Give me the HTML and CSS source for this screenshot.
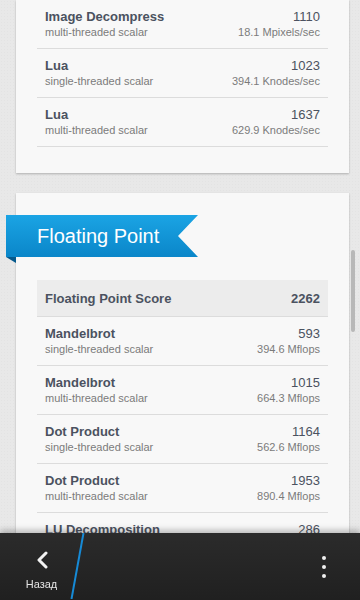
FILE: index.html
```html
<!DOCTYPE html>
<html lang="ru">
<head>
  <meta charset="UTF-8" />
  <meta name="viewport" content="width=device-width, initial-scale=1" />
  <title>Geekbench - Results</title>
  <link rel="stylesheet" href="styles.css">
</head>
<body>

<main class="page">
  <section class="card card-top">
    <div class="row">
      <div class="row-line"><span class="name">Image Decompress</span><span class="score">1110</span></div>
      <div class="row-line sub"><span>multi-threaded scalar</span><span>18.1 Mpixels/sec</span></div>
    </div>
    <div class="row">
      <div class="row-line"><span class="name">Lua</span><span class="score">1023</span></div>
      <div class="row-line sub"><span>single-threaded scalar</span><span>394.1 Knodes/sec</span></div>
    </div>
    <div class="row">
      <div class="row-line"><span class="name">Lua</span><span class="score">1637</span></div>
      <div class="row-line sub"><span>multi-threaded scalar</span><span>629.9 Knodes/sec</span></div>
    </div>
  </section>

  <section class="card">
    <div class="ribbon">
      <div class="ribbon-body">Floating Point</div>
    </div>

    <div class="total">
      <span>Floating Point Score</span><span>2262</span>
    </div>
    <div class="row">
      <div class="row-line"><span class="name">Mandelbrot</span><span class="score">593</span></div>
      <div class="row-line sub"><span>single-threaded scalar</span><span>394.6 Mflops</span></div>
    </div>
    <div class="row">
      <div class="row-line"><span class="name">Mandelbrot</span><span class="score">1015</span></div>
      <div class="row-line sub"><span>multi-threaded scalar</span><span>664.3 Mflops</span></div>
    </div>
    <div class="row">
      <div class="row-line"><span class="name">Dot Product</span><span class="score">1164</span></div>
      <div class="row-line sub"><span>single-threaded scalar</span><span>562.6 Mflops</span></div>
    </div>
    <div class="row">
      <div class="row-line"><span class="name">Dot Product</span><span class="score">1953</span></div>
      <div class="row-line sub"><span>multi-threaded scalar</span><span>890.4 Mflops</span></div>
    </div>
    <div class="row">
      <div class="row-line"><span class="name">LU Decomposition</span><span class="score">286</span></div>
      <div class="row-line sub"><span>single-threaded scalar</span><span>221.4 Mflops</span></div>
    </div>
  </section>
</main>

<div class="scrollbar"></div>

<footer class="actionbar">
  <svg class="divider" width="100" height="66" viewBox="0 0 100 66">
    <line x1="83.5" y1="0" x2="71.5" y2="66" stroke="#168ad6" stroke-width="2" />
  </svg>
  <a class="back" href="#">
    <svg width="14" height="18" viewBox="0 0 14 18">
      <polyline points="11,2 4,9 11,16" fill="none" stroke="#f2f2f2" stroke-width="3" stroke-linecap="round" stroke-linejoin="round" />
    </svg>
    <span>Назад</span>
  </a>
  <div class="overflow">
    <i></i><i></i><i></i>
  </div>
</footer>

</body>
</html>
```

FILE: styles.css
```css
html, body {
  height: 100%;
}
body {
  margin: 0;
  overflow: hidden;
  font-family: 'Liberation Sans', Arial, sans-serif;
  background-color: #e8e8e8;
  background-image: radial-gradient(rgba(0, 0, 0, 0.025) 1px, transparent 1px);
  background-size: 3px 3px;
}
.page {
  padding: 0 11px 0 16px;
}
.card {
  background-color: #f8f8f8;
  box-shadow: 0 1px 2px rgba(0, 0, 0, 0.25);
  margin-top: 20px;
  padding: 22px 21px 26px;
}
.card-top {
  margin-top: 0;
  padding-top: 0;
}
.row {
  padding: 9px 8px 8px;
  border-bottom: 1px solid #dcdcdc;
}
.row-line {
  display: flex;
  justify-content: space-between;
  font-size: 13px;
  line-height: 16px;
  color: #4b5260;
}
.row-line .name {
  font-weight: bold;
}
.row-line.sub {
  font-size: 11px;
  line-height: 15px;
  color: #7b7b7b;
}
/* blue banner hanging over the card edge */
.ribbon {
  position: relative;
  width: 192px;
  height: 42px;
  margin: 0 0 23px -31px;
}
.ribbon-body {
  height: 100%;
  padding-left: 31px;
  font-size: 20px;
  line-height: 43px;
  color: #fff;
  background: linear-gradient(#1ba4e4, #0a86c9);
  clip-path: polygon(0 0, 100% 0, calc(100% - 20px) 50%, 100% 100%, 0 100%);
}
.ribbon::after {
  content: "";
  position: absolute;
  left: 0;
  top: 42px;
  border-top: 6px solid #05598c;
  border-left: 10px solid transparent;
}
.total {
  display: flex;
  justify-content: space-between;
  align-items: center;
  height: 36px;
  padding: 0 8px;
  background-color: #ececec;
  border-bottom: 1px solid #dcdcdc;
  font-size: 13px;
  font-weight: bold;
  color: #4b5260;
}
.scrollbar {
  position: fixed;
  left: 351px;
  top: 250px;
  width: 4px;
  height: 82px;
  border-radius: 2px;
  background-color: #b8b8b8;
}
.actionbar {
  position: fixed;
  left: 0;
  right: 0;
  bottom: 0;
  height: 67px;
  display: flex;
  justify-content: space-between;
  background: linear-gradient(#2b2b2b, #202020);
  box-shadow: 0 -3px 6px rgba(0, 0, 0, 0.25);
}
.divider {
  position: absolute;
  left: 0;
  top: 0;
}
.back {
  width: 84px;
  display: flex;
  flex-direction: column;
  align-items: center;
  padding-top: 18px;
  box-sizing: border-box;
  text-decoration: none;
  color: #e4e4e4;
  font-size: 11px;
}
.back svg {
  margin-left: -1px;
}
.back span {
  margin-top: 9px;
  padding-right: 1px;
}
.overflow {
  width: 72px;
  display: flex;
  flex-direction: column;
  align-items: center;
  gap: 5px;
  padding: 23px 0 0 0;
  box-sizing: border-box;
}
.overflow i {
  display: block;
  width: 4px;
  height: 4px;
  border-radius: 50%;
  background-color: #f0f0f0;
}
```
